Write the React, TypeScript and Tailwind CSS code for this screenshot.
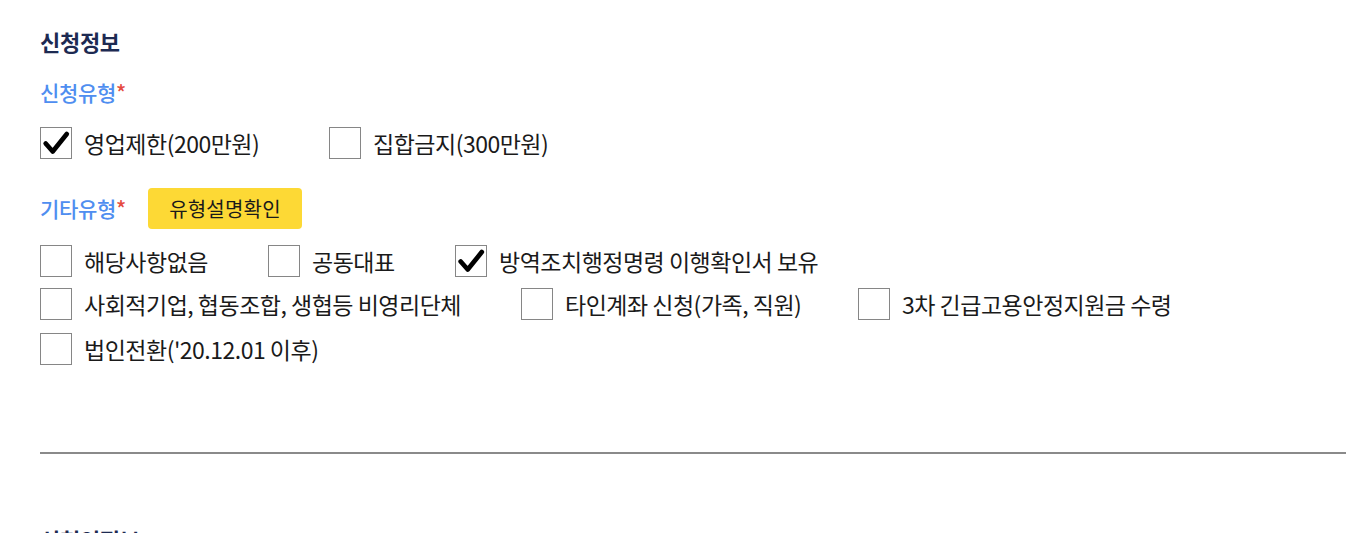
const fontStack = "font-['Noto_Sans_CJK_KR','Noto_Sans',sans-serif]";

type Option = { label: string; checked?: boolean; width?: string };

function CheckMark() {
  return (
    <svg viewBox="0 0 32 32" className="h-full w-full">
      <polyline
        points="5,16.5 12.5,25 27.5,6.5"
        fill="none"
        stroke="#000"
        strokeWidth="5"
        strokeLinecap="round"
        strokeLinejoin="round"
      />
    </svg>
  );
}

function CheckItem({ label, checked, width }: Option) {
  return (
    <label className={`flex items-center gap-[12px] ${width ?? ""}`}>
      <span className="flex h-[32px] w-[32px] shrink-0 items-center justify-center border border-[#868686] bg-white">
        {checked && <CheckMark />}
      </span>
      <span className="whitespace-nowrap text-[23px] leading-none tracking-[-0.5px] text-[#1a1a1a]">{label}</span>
    </label>
  );
}

function FieldLabel({ children }: { children: string }) {
  return (
    <span className="text-[21px] font-medium leading-none tracking-[-0.3px] text-[#4f8ef0]">
      {children}
      <span className="text-[#e54b3f]">*</span>
    </span>
  );
}

export default function App() {
  return (
    <div className={`min-h-[533px] bg-white pl-[40px] pr-[18px] ${fontStack}`}>
      <h2 className="pt-[30px] text-[22px] font-bold leading-none tracking-[-0.3px] text-[#1d2a52]">신청정보</h2>

      <div className="mt-[30px] flex">
        <FieldLabel>신청유형</FieldLabel>
      </div>
      <div className="mt-[24px] flex">
        <CheckItem label="영업제한(200만원)" checked width="w-[289px]" />
        <CheckItem label="집합금지(300만원)" />
      </div>

      <div className="mt-[29px] flex items-center gap-[22px]">
        <FieldLabel>기타유형</FieldLabel>
        <button className="flex h-[41px] w-[154px] items-center justify-center rounded-[4px] bg-[#fdd935] text-[20px] leading-none tracking-[0.2px] text-[#1a1a1a]">
          유형설명확인
        </button>
      </div>

      <div className="mt-[16px] flex">
        <CheckItem label="해당사항없음" width="w-[228px]" />
        <CheckItem label="공동대표" width="w-[187px]" />
        <CheckItem label="방역조치행정명령 이행확인서 보유" checked />
      </div>
      <div className="mt-[11px] flex">
        <CheckItem label="사회적기업, 협동조합, 생협등 비영리단체" width="w-[481px]" />
        <CheckItem label="타인계좌 신청(가족, 직원)" width="w-[337px]" />
        <CheckItem label="3차 긴급고용안정지원금 수령" />
      </div>
      <div className="mt-[13px] flex">
        <CheckItem label="법인전환('20.12.01 이후)" />
      </div>

      <div className="mt-[87px] h-[2px] bg-[#8a8a8a]" />

      <h2 className="mt-[74px] text-[22px] font-bold leading-none tracking-[-0.3px] text-[#1d2a52]">신청인정보</h2>
    </div>
  );
}
